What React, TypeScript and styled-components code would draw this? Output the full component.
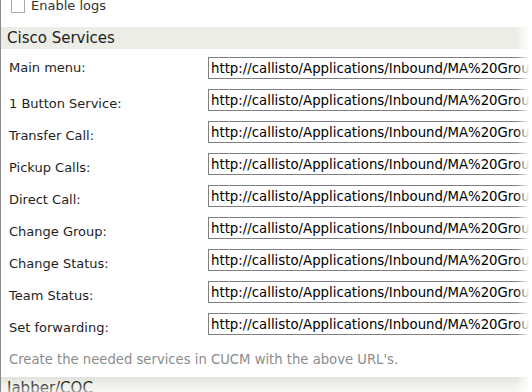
import React from "react";
import styled, { createGlobalStyle } from "styled-components";

const GlobalStyle = createGlobalStyle`
  html, body { margin: 0; padding: 0; background: #ffffff; }
  body {
    font-family: "DejaVu Sans", Verdana, sans-serif;
    font-size: 13px;
    color: #1e1e1e;
    overflow: hidden;
  }
`;

const Frame = styled.div`
  position: relative;
  width: 532px;
  height: 392px;
  overflow: hidden;
  box-sizing: border-box;
  border-left: 1px solid #8a8a8a;
  background: #ffffff;
`;

const CheckRow = styled.label`
  display: flex;
  align-items: center;
  gap: 6px;
  height: 16px;
  margin-top: -2px;
  padding-left: 10px;
  color: #333333;
  line-height: 16px;
`;

const CheckBox = styled.span`
  display: block;
  box-sizing: border-box;
  width: 14px;
  height: 14px;
  border: 1px solid #a9a9a9;
  background: #ffffff;
`;

const SectionHeader = styled.div<{ $shade?: boolean }>`
  margin-top: ${(p) => (p.$shade ? "9px" : "13px")};
  height: 22px;
  line-height: 22px;
  padding-left: 6px;
  font-size: 15px;
  color: #1e1e1e;
  background: ${(p) =>
    p.$shade
      ? "linear-gradient(to bottom, #e2e2dd 0px, #ededE8 6px, #ededE8 100%)"
      : "#ededE8"};
`;

const Rows = styled.div`
  display: flex;
  flex-direction: column;
  padding-top: 8px;
`;

const Row = styled.div`
  display: flex;
  height: 32px;
`;

const Label = styled.div<{ $offset: number }>`
  width: 199px;
  flex: none;
  padding-left: 8px;
  padding-top: ${(p) => p.$offset}px;
  line-height: 16px;
  color: #1e1e1e;
`;

const UrlInput = styled.input`
  flex: none;
  box-sizing: border-box;
  width: 340px;
  height: 22px;
  margin: 0;
  padding: 0 2px;
  border: 1px solid #7f7f7f;
  border-radius: 0;
  outline: none;
  font-family: "DejaVu Sans", Verdana, sans-serif;
  font-size: 13.3px;
  color: #000000;
  background: #ffffff;
`;

const Help = styled.div`
  margin-top: 7px;
  padding-left: 8px;
  line-height: 16px;
  font-size: 13.2px;
  color: #8c8c8c;
`;

const RightFade = styled.div`
  position: absolute;
  top: 0;
  right: 0;
  bottom: 0;
  width: 16px;
  background: linear-gradient(to right, rgba(255, 255, 255, 0), #ffffff 85%);
  pointer-events: none;
`;

const BottomFade = styled.div`
  position: absolute;
  left: 0;
  right: 0;
  bottom: 0;
  height: 10px;
  background: linear-gradient(to bottom, rgba(255, 255, 255, 0), rgba(255, 255, 255, 0.55));
  pointer-events: none;
`;

const URL = "http://callisto/Applications/Inbound/MA%20Group%20Service/Menu.aspx";

const services = [
  "Main menu:",
  "1 Button Service:",
  "Transfer Call:",
  "Pickup Calls:",
  "Direct Call:",
  "Change Group:",
  "Change Status:",
  "Team Status:",
  "Set forwarding:",
];

export default function App() {
  return (
    <>
      <GlobalStyle />
      <Frame>
        <CheckRow>
          <CheckBox />
          Enable logs
        </CheckRow>
        <SectionHeader>Cisco Services</SectionHeader>
        <Rows>
          {services.map((s, i) => (
            <Row key={s}>
              <Label $offset={i === 0 ? 3 : 7}>{s}</Label>
              <UrlInput readOnly value={URL} />
            </Row>
          ))}
        </Rows>
        <Help>Create the needed services in CUCM with the above URL's.</Help>
        <SectionHeader $shade>Jabber/COC</SectionHeader>
        <RightFade />
        <BottomFade />
      </Frame>
    </>
  );
}
